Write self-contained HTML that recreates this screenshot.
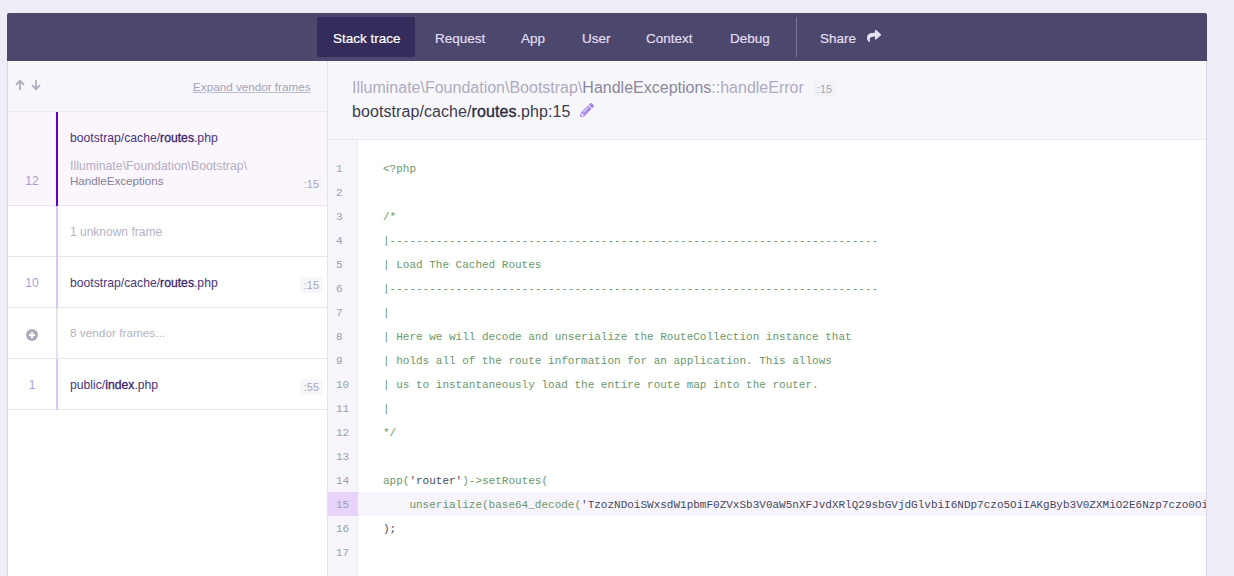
<!DOCTYPE html>
<html><head><meta charset="utf-8">
<style>
*{box-sizing:border-box;margin:0;padding:0}
html,body{width:1234px;height:576px;overflow:hidden;background:#ededf5;font-family:"Liberation Sans",sans-serif}
#nav{position:absolute;left:7px;top:13px;width:1200px;height:48px;background:#4c476d;border-radius:2px 2px 0 0}
.tab{position:absolute;top:2px;height:48px;line-height:48px;font-size:13.5px;color:#e2def2;white-space:nowrap;-webkit-text-stroke:0.2px currentColor}
#active{position:absolute;left:310px;top:4px;width:98px;height:40px;background:#342c5a;border-radius:2px}
#sep{position:absolute;left:789px;top:4px;width:1px;height:40px;background:#7a7598}
#share{position:absolute;left:860px;top:17px}
#left{position:absolute;left:7px;top:61px;width:321px;height:515px;background:#fff;border-right:1px solid #e4e3ec;border-left:1px solid #d9d8e2}
#lhead{position:absolute;left:0;top:0;width:319px;height:51px;background:#f7f7fb;border-bottom:1px solid #ebeaf1}
#expand{position:absolute;left:185px;top:20px;font-size:11.7px;line-height:12px;color:#a6a2b9;text-decoration:underline;text-decoration-color:#bcb9cc;white-space:nowrap}
#arrows{position:absolute;left:7px;top:18px}
.row{position:absolute;left:0;width:319px;border-bottom:1px solid #e7e6ec;background:#fff}
.row.sel{background:#fbf5fd}
.bar{position:absolute;left:48px;top:0;bottom:-1px;width:2px;background:#d9c6f7}
.sel .bar{background:#6200cc}
.bar.v{background:#e3e1ec}
.num{position:absolute;left:0;width:48px;text-align:center;font-size:12px;line-height:12px;color:#a49ed4}
.ftxt{position:absolute;left:62px;font-size:12px;line-height:12px;white-space:nowrap}
.file{color:#4a3479;font-size:12.2px}
.file b{font-weight:normal;color:#3a236b;-webkit-text-stroke:0.3px #3a236b}
.cls{color:#b3afc3}
.cls2{color:#84819a}
.gray{color:#b5b2c4}
.badge{position:absolute;right:4px;font-size:11px;color:#a9a6ba;background:#f7f6fa;padding:0 4px;height:16px;line-height:17px;white-space:nowrap}
#right{position:absolute;left:328px;top:61px;width:879px;height:515px;background:#fff;border-right:1px solid #d9d7e4;overflow:hidden}
#rhead{position:absolute;left:0;top:0;width:878px;height:79px;background:#f7f7fb;border-bottom:1px solid #ebeaf1}
#h1{position:absolute;left:24px;top:19px;font-size:16px;line-height:16px;white-space:nowrap;color:#aeaabf}
#h1 .d{color:#8a879c}
#h1 .badge{position:static;display:inline-block;vertical-align:0px;margin-left:9px;font-size:11px;height:15px;line-height:16px;background:#f2f1f7;color:#aaa7ba}
#h2{position:absolute;left:24px;top:43px;font-size:16px;letter-spacing:0.08px;line-height:16px;white-space:nowrap;color:#3d3b4f}
#h2 b{font-weight:normal;color:#2c2a3d;-webkit-text-stroke:0.35px #2c2a3d}
#pencil{position:absolute;left:252px;top:42px}
#gutter{position:absolute;left:0;top:79px;width:30px;bottom:0;background:#f6f5fb;border-right:1px solid #ecebf3}
.ln{position:absolute;left:8px;width:22px;font-family:"Liberation Mono",monospace;font-size:11px;color:#a09db2;height:24px;line-height:24px;padding-top:1px}
.code{position:absolute;left:55px;font-family:"Liberation Mono",monospace;font-size:11px;color:#6a976b;white-space:pre;height:24px;line-height:24px;padding-top:1px}
.s{color:#464860}
.hl{position:absolute;left:30px;width:848px;height:24px;background:#f8f4fc}
.hlg{position:absolute;left:0;width:30px;height:24px;background:#e8d4fb}

</style></head><body>
<div id="nav">
  <div id="active"></div>
  <div class="tab" style="left:326px;color:#fff">Stack trace</div>
  <div class="tab" style="left:428px">Request</div>
  <div class="tab" style="left:514px">App</div>
  <div class="tab" style="left:575px">User</div>
  <div class="tab" style="left:639px">Context</div>
  <div class="tab" style="left:723px">Debug</div>
  <div id="sep"></div>
  <div class="tab" style="left:813px">Share</div>
  <svg id="share" width="14.2" height="12.3" viewBox="0 37 512 443"><path d="M503.691 189.836L327.687 37.851C312.281 24.546 288 35.347 288 56.015v80.053C127.371 137.907 0 170.1 0 322.326c0 61.441 39.581 122.309 83.333 154.132 13.653 9.931 33.111-2.533 28.077-18.631C66.066 312.814 132.917 274.316 288 272.085V360c0 20.7 24.3 31.453 39.687 18.164l176.004-152c11.071-9.562 11.086-26.753 0-36.328z" fill="#e6e2f4"/></svg>
</div>
<div id="left">
  <div id="lhead">
    <svg id="arrows" width="30" height="14" viewBox="0 0 30 14"><g stroke="#aeabbf" stroke-width="1.8" fill="none" stroke-linecap="butt" stroke-linejoin="miter"><path d="M5 1.5 V11"/><path d="M1 5.8 L5 1.8 L9 5.8"/><path d="M21 1 V10.5"/><path d="M17 6.2 L21 10.2 L25 6.2"/></g></svg>
    <div id="expand">Expand vendor frames</div>
  </div>
  <div class="row sel" style="top:51px;height:94px">
    <div class="bar"></div>
    <div class="num" style="top:63px">12</div>
    <div class="ftxt file" style="top:20px">bootstrap/cache/<b>routes</b>.php</div>
    <div class="ftxt cls" style="top:48px;font-size:12.3px">Illuminate\Foundation\Bootstrap\</div>
    <div class="ftxt cls2" style="top:63px;font-size:11.6px">HandleExceptions</div>
    <div class="badge" style="top:64px">:15</div>
  </div>
  <div class="row" style="top:145px;height:51px">
    <div class="bar"></div>
    <div class="ftxt gray" style="top:20px">1 unknown frame</div>
  </div>
  <div class="row" style="top:196px;height:51px">
    <div class="bar"></div>
    <div class="num" style="top:20px">10</div>
    <div class="ftxt file" style="top:20px">bootstrap/cache/<b>routes</b>.php</div>
    <div class="badge" style="top:20px">:15</div>
  </div>
  <div class="row" style="top:247px;height:51px">
    <div class="bar v"></div>
    <svg style="position:absolute;left:18px;top:21px" width="12" height="12" viewBox="0 0 12 12"><circle cx="6" cy="6" r="6" fill="#aeabbd"/><path d="M6 3 V9 M3 6 H9" stroke="#fff" stroke-width="2"/></svg>
    <div class="ftxt gray" style="top:19px;font-size:11.8px">8 vendor frames...</div>
  </div>
  <div class="row" style="top:298px;height:51px">
    <div class="bar"></div>
    <div class="num" style="top:20px">1</div>
    <div class="ftxt file" style="top:20px">public/<b>index</b>.php</div>
    <div class="badge" style="top:20px">:55</div>
  </div>
</div>
<div id="right">
  <div id="rhead">
    <div id="h1">Illuminate\Foundation\Bootstrap\<span class="d">HandleExceptions</span>::handleError<span class="badge">:15</span></div>
    <div id="h2">bootstrap/cache/<b>routes</b>.php:15</div>
    <svg id="pencil" width="14" height="14" viewBox="0 0 512 512"><path d="M497.9 142.1l-46.1 46.1c-4.7 4.7-12.3 4.7-17 0l-111-111c-4.7-4.7-4.7-12.3 0-17l46.1-46.1c18.7-18.7 49.1-18.7 67.9 0l60.1 60.1c18.8 18.7 18.8 49.1 0 67.9zM284.2 99.8L21.6 362.4.4 483.9c-2.9 16.4 11.4 30.6 27.8 27.8l121.5-21.3 262.6-262.6c4.7-4.7 4.7-12.3 0-17l-111-111c-4.8-4.7-12.4-4.7-17.1 0zM124.1 339.9c-5.5-5.5-5.5-14.3 0-19.8l154-154c5.5-5.5 14.3-5.5 19.8 0s5.5 14.3 0 19.8l-154 154c-5.5 5.5-14.3 5.5-19.8 0zM88 424h48v36.3l-64.5 11.3-31.1-31.1L51.7 376H88v48z" fill="#a88ce8"/></svg>
  </div>
  <div id="gutter"></div>
<div class="ln" style="top:95px">1</div>
<div class="code" style="top:95px">&lt;?php</div>
<div class="ln" style="top:119px">2</div>
<div class="ln" style="top:143px">3</div>
<div class="code" style="top:143px">/*</div>
<div class="ln" style="top:167px">4</div>
<div class="code" style="top:167px">|--------------------------------------------------------------------------</div>
<div class="ln" style="top:191px">5</div>
<div class="code" style="top:191px">| Load The Cached Routes</div>
<div class="ln" style="top:215px">6</div>
<div class="code" style="top:215px">|--------------------------------------------------------------------------</div>
<div class="ln" style="top:239px">7</div>
<div class="code" style="top:239px">|</div>
<div class="ln" style="top:263px">8</div>
<div class="code" style="top:263px">| Here we will decode and unserialize the RouteCollection instance that</div>
<div class="ln" style="top:287px">9</div>
<div class="code" style="top:287px">| holds all of the route information for an application. This allows</div>
<div class="ln" style="top:311px">10</div>
<div class="code" style="top:311px">| us to instantaneously load the entire route map into the router.</div>
<div class="ln" style="top:335px">11</div>
<div class="code" style="top:335px">|</div>
<div class="ln" style="top:359px">12</div>
<div class="code" style="top:359px">*/</div>
<div class="ln" style="top:383px">13</div>
<div class="ln" style="top:407px">14</div>
<div class="code" style="top:407px">app(<span class=s>'router'</span>)-&gt;setRoutes(</div>
<div class="hl" style="top:431px"></div><div class="hlg" style="top:431px"></div>
<div class="ln" style="top:431px">15</div>
<div class="code" style="top:431px">    unserialize(base64_decode(<span class=s>'TzozNDoiSWxsdW1pbmF0ZVxSb3V0aW5nXFJvdXRlQ29sbGVjdGlvbiI6NDp7czo5OiIAKgByb3V0ZXMiO2E6Nzp7czo0OiJHRVQiO2E6NTp7czoxOiIvIjtPOjI0OiJJbGx1bWluYXRlXFJvdXRpbmdcUm91dGUiOjEyOntzOjM6InVyaSI7czoxOiIvIjtzOjc6Im1ldGhvZHMiO2E6Mjp7aTowO3M6MzoiR0VUIjtpOjE7czo0OiJIRUFEIjt9'</span></div>
<div class="ln" style="top:455px">16</div>
<div class="code" style="top:455px"><span class=s>);</span></div>
<div class="ln" style="top:479px">17</div>
</div>

</body></html>
